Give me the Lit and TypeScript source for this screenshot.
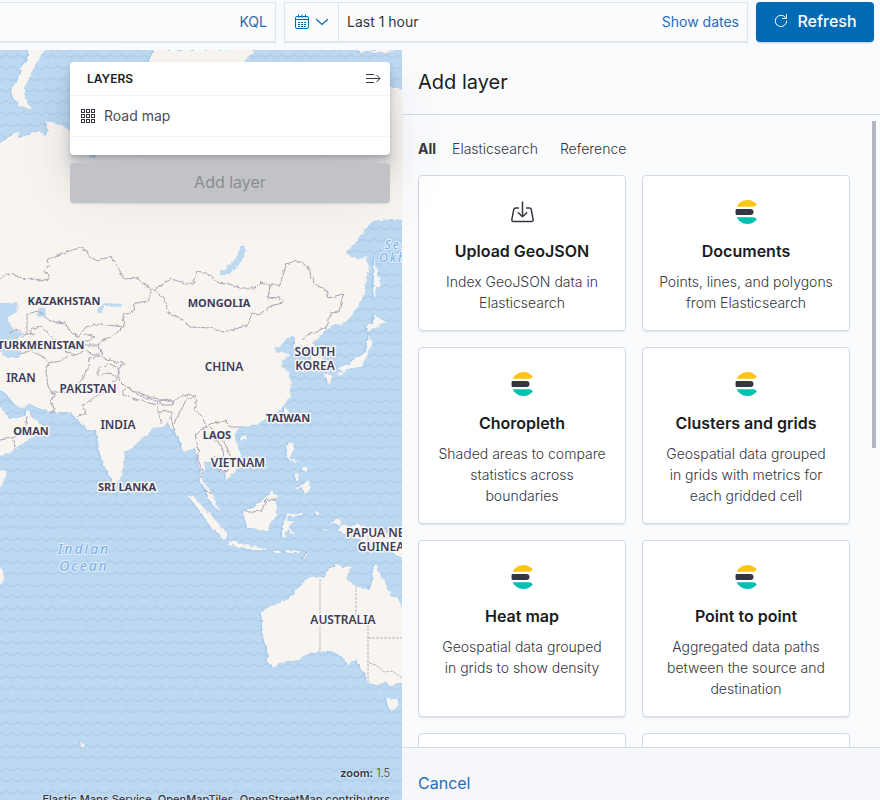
import { LitElement, html, css, svg } from "lit";
import { customElement, property } from "lit/decorators.js";

type Pt = [number, number];
type Label = { x: number; y: number; t: string };

const LAND = [
  // Novaya Zemlya
  "28,50 29,54 25,62 20,68 22,71 19,77 16,83 12,87 11,92 13,98 18,102 19,107 32,109 28,103 25,97 25,88 30,75 38,60 45,50",
  // Eurasia
  "-5,146 0,143 8,138 14,132 19,131 18,138 25,136 32,133 39,131 43,134 45,136 49,130 47,126 45,121 52,122 62,125 70,131 88,150 89,158 95,158 97,150 130,110 150,75 149,60 154,50 255,50 243,62 243,90 300,96 360,80 390,87 405,90 405,220 390,219 373,221 364,231 355,243 345,253 358,259 366,257 369,266 366,280 365,292 358,306 350,318 340,326 335,324 327,328 320,336 313,343 316,347 321,353 323,362 320,368 314,369 311,360 310,352 306,348 301,346 296,350 293,346 295,338 292,336 285,340 282,345 274,348 277,353 284,352 290,356 283,360 281,366 288,372 291,381 290,390 291,396 286,402 282,408 276,413 268,419 256,425 246,427 242,426 237,430 234,436 238,447 242,458 240,467 233,473 226,480 225,473 219,470 214,462 204,462 205,468 202,474 202,480 208,488 213,495 216,504 220,511 214,507 208,498 206,490 203,485 199,480 200,470 197,458 195,448 184,452 182,446 178,438 173,430 168,422 163,427 153,428 150,432 138,442 132,448 125,452 124,462 122,474 121,478 117,483 112,482 108,472 102,462 99,450 97,440 96,430 88,430 82,424 76,419 71,412 50,412 38,408 30,404 24,408 15,405 10,399 5,393 -5,387",
  // Arabia
  "-5,404 4,412 8,418 17,418 25,416 27,409 30,416 36,420 43,428 35,436 25,442 15,449 8,453 -5,458",
  "-5,471 7,470 3,484 -5,494",
  "-5,565 0,567 3,571 4,577 2,584 -5,590",
  // Australia
  "405,612 402,606 396,598 390,595 385,581 380,577 377,567 375,563 373,569 372,582 369,590 361,588 352,583 346,578 351,567 343,567 335,565 328,570 325,574 323,578 317,578 311,576 305,580 300,587 295,589 293,595 288,599 275,604 265,609 261,614 262,622 262,635 266,645 268,657 266,661 273,667 280,663 290,661 298,661 303,656 312,653 322,651 331,651 340,655 345,660 348,665 353,661 356,659 360,669 365,673 367,683 377,685 386,682 390,687 396,683 405,683",
  "386,698 397,699 398,704 396,708 392,712 388,707",
  // Japan and Sakhalin
  "374,256 376,266 381,286 379,288 376,287 375,300 373,290 374,275",
  "374,314 380,319 387,322 381,324 376,328 371,330 367,331 366,326 373,323",
  "368,335 371,339 372,346 368,352 366,360 361,366 355,368 348,368 344,372 337,369 341,366 350,364 355,358 362,355 366,350 367,342",
  "323,375 328,373 332,376 331,380 329,384 326,379",
  "336,374 343,371 342,374 338,376",
  // Hainan, Taiwan, Philippines
  "240,437 246,435 247,438 243,441 240,440",
  "284,408 289,410 287,419 284,416",
  "288,443 293,442 294,450 291,456 289,459 294,459 300,463 296,462 290,461 286,456",
  "303,466 306,468 306,472 303,470",
  "296,473 299,478 297,481 294,476",
  "294,488 303,484 309,480 310,489 305,493 301,487 295,489",
  // Borneo
  "242,510 248,510 256,505 262,500 272,491 274,494 279,495 275,500 277,507 276,516 272,521 268,531 260,530 247,528 245,518",
  // Sumatra and Java
  "187,495 194,497 204,508 216,521 224,529 227,532 227,540 222,538 210,526 202,514",
  "228,541 236,542 246,545 256,546 266,550 254,550 238,547 230,545",
  "274,551 280,551 279,553 274,553",
  "285,551 300,551 299,553 285,553",
  "303,556 309,552 306,557 302,559",
  // Sulawesi and Moluccas
  "287,514 302,513 302,515 288,517 286,521 294,521 289,526 295,536 291,534 287,528 285,538 282,537 282,528",
  "315,511 319,512 318,516 316,515",
  "320,530 327,529 326,531",
  // New Guinea
  "329,522 336,519 341,521 340,526 346,525 350,527 357,524 365,527 380,532 405,540 405,560 398,557 388,548 378,546 368,542 358,540 350,534 343,533 337,529 341,527",
  "80,742 85,744 84,747 81,747",
  "357,50 361,54 366,52 381,53 398,50",
];

const LAKES = [
  "-5,303 8,303 17,302 18,312 11,315 7,318 11,326 15,330 22,334 24,336 18,338 19,347 21,353 19,358 8,358 -5,350",
  "37,308 45,307 46,318 38,317 36,314 40,311",
  "97,310 104,303 122,304 119,307 104,306 101,313 98,313",
  "241,246 246,246 244,256 238,266 228,275 219,275 222,271 230,265 238,255",
];

const BORDERS = [
  "0,279 6,274 14,275 20,278 25,280 33,278 40,281 48,279 49,275 44,272 49,265 47,260 50,258 66,252 80,248 86,250 89,257 98,261 110,256 118,267 124,279 137,278 145,285 154,290",
  "154,290 171,279 193,285 198,271 212,276 216,282 226,283 240,288 255,288 261,282 270,285 280,285 286,266 285,264 297,261 308,266 314,284 326,290 328,298 343,294 339,312 331,313 327,326 317,332 310,334 302,340",
  "154,290 165,299 168,313 182,319 190,327 210,328 223,332 235,329 248,325 252,313 259,315 270,306 283,303 279,297 268,298 270,285",
  "152,290 148,301 135,303 133,312 123,315 124,327 100,324 86,327 78,337 70,332 65,323 50,321 38,311 27,314 27,334 35,334",
  "10,333 16,329 24,334 31,334 31,329 40,326 50,335 60,345 68,353 76,355 85,350 93,355 100,355",
  "123,328 110,337 98,343 101,352 104,358 116,362 124,363 119,370 119,380 127,388 150,397 172,402 180,397 190,394",
  "85,334 95,337 88,341 80,340 84,345 98,345",
  "20,354 30,351 44,357 48,363 60,361 69,355",
  "48,363 46,372 48,386 50,390 55,395 51,401 55,411 50,412",
  "50,392 60,392 72,393 80,382 88,368 89,358 104,356",
  "98,368 98,376 107,373 118,377 110,384 104,392 92,399 82,405 86,413 77,417",
  "98,368 110,364 118,368 119,378",
  "123,390 128,387 138,395 157,401 158,405 145,402 132,398 123,395 123,390",
  "159,401 166,399 174,402 172,405 162,405 159,401",
  "157,407 162,425",
  "159,411 172,412 171,418 174,430",
  "196,395 186,400 180,412 174,424",
  "190,394 198,400 194,408 203,419 206,426 201,430 195,436 199,450 197,456 202,470 200,478",
  "203,430 210,424 225,421 231,427 241,427",
  "210,427 220,436 228,450 232,460 226,464",
  "207,438 218,441 224,452 222,463 215,461 213,455",
  "218,470 228,472 228,464",
  "204,490 211,493 212,490",
  "243,510 247,512 255,512 262,510 266,500 276,499",
  "0,440 12,438 16,449",
  "12,438 25,432 27,416",
  "302,559 307,552",
];

const LABELS: Label[] = [
  { x: 64, y: 305, t: "KAZAKHSTAN" },
  { x: 41, y: 349, t: "TURKMENISTAN" },
  { x: 219, y: 307, t: "MONGOLIA" },
  { x: 31, y: 435, t: "OMAN" },
  { x: 288, y: 422, t: "TAIWAN" },
  { x: 217, y: 439, t: "LAOS" },
  { x: 127, y: 491, t: "SRI LANKA" },
];

const LARGE_LABELS: Label[] = [
  { x: 21, y: 382, t: "IRAN" },
  { x: 88, y: 393, t: "PAKISTAN" },
  { x: 224, y: 371, t: "CHINA" },
  { x: 315, y: 356, t: "SOUTH" },
  { x: 315, y: 370, t: "KOREA" },
  { x: 118, y: 429, t: "INDIA" },
  { x: 238, y: 467, t: "VIETNAM" },
  { x: 381, y: 537, t: "PAPUA NEW" },
  { x: 381, y: 551, t: "GUINEA" },
  { x: 343, y: 624, t: "AUSTRALIA" },
];

const SEAS: Label[] = [
  { x: 84, y: 554, t: "Indian" },
  { x: 84, y: 571, t: "Ocean" },
  { x: 407, y: 249, t: "Sea of" },
  { x: 408, y: 262, t: "Okhotsk" },
];

const area = (p: string) => svg`<polygon points=${p}></polygon>`;
const line = (p: string) => svg`<polyline points=${p}></polyline>`;
const text = (l: Label) => svg`<text x=${l.x} y=${l.y}>${l.t}</text>`;

@customElement("world-map")
export class WorldMap extends LitElement {
  static styles = css`
    :host { display: block; overflow: hidden; background: #bdd8f1; }
    svg { display: block; width: 100%; height: 100%; }
    .edge { fill: #95c3f0; stroke: #a5cbf1; stroke-width: 1; }
    .land { fill: #f8f4f0; }
    .water { fill: #bdd8f1; }
    .borders { fill: none; stroke: #a9a5b2; stroke-width: 1; }
    .states { fill: none; stroke: #b9b5c2; stroke-width: 1; stroke-dasharray: 3 1; }
    .wave { fill: none; stroke: #b3d0ea; stroke-width: 2; }
    text { text-anchor: middle; paint-order: stroke; stroke-linejoin: round; font-family: "Noto Sans", sans-serif; }
    .names { font-size: 11px; font-weight: 700; fill: #3f3d56; stroke: #f8f7f7; stroke-width: 3; }
    .large { font-size: 12px; font-weight: 600; }
    .seas { font-size: 14px; font-style: italic; letter-spacing: 2px; fill: #74aee9; stroke: #e3effa; stroke-width: 2; }
    .small { font-size: 12px; }
  `;

  render() {
    return html`
      <svg viewBox="0 50 402 750" preserveAspectRatio="xMidYMid slice" role="img" aria-label="World map">
        <defs>
          <pattern id="waves" width="23" height="23" y="5" patternUnits="userSpaceOnUse">
            <path class="wave" d="M-6 3Q-1 9 4 5Q5 4 6 4Q7 4 8 5Q12 8 16 5Q17 4 18 4Q19 4 20 5Q24 8 28 4"></path>
            <path class="wave" d="M-6 16Q-4 18 -2 16Q-1 15 0 15Q1 15 2 16Q6 19 10 16Q11 15 12 15Q13 15 14 16Q18 19 22 16Q23 15 24 15"></path>
          </pattern>
          <filter id="rough" x="0" y="0" width="1" height="1">
            <feTurbulence type="fractalNoise" baseFrequency="0.22" numOctaves="2" seed="4"></feTurbulence>
            <feDisplacementMap in="SourceGraphic" scale="4" xChannelSelector="R" yChannelSelector="G"></feDisplacementMap>
          </filter>
        </defs>
        <rect y="50" width="402" height="750" fill="url(#waves)"></rect>
        <g filter="url(#rough)">
          <g class="edge" transform="translate(-1 0)">${LAND.map(area)}</g>
          <g class="land">${LAND.map(area)}</g>
          <g class="water">${LAKES.map(area)}</g>
          <g class="borders">${BORDERS.map(line)}</g>
        </g>
        <g class="states">
          ${["320,579 320,651", "356,585 356,620", "368,620 368,682", "368,638 402,638", "369,663 376,665 384,672 392,671 402,678", "368,535 368,554"].map(line)}
        </g>
        <g class="names">${LABELS.map(text)}<g class="large">${LARGE_LABELS.map(text)}</g></g>
        <g class="seas">${SEAS.slice(0, 2).map(text)}<g class="small">${SEAS.slice(2).map(text)}</g></g>
      </svg>
    `;
  }
}

const elastic = html`<svg width="24" height="24" viewBox="0 0 32 32" aria-hidden="true">
  <path fill="#343741" d="M2 16c0 1.384.194 2.72.524 4H22a4 4 0 000-8H2.524A15.984 15.984 0 002 16z"></path>
  <path fill="#FEC514" d="M28.924 7.662A15.381 15.381 0 0030.48 6C27.547 2.346 23.05 0 18 0 11.679 0 6.239 3.678 3.644 9H25.51a5.039 5.039 0 003.413-1.338z"></path>
  <path fill="#00BFB3" d="M25.51 23H3.645C6.24 28.323 11.679 32 18 32c5.05 0 9.547-2.346 12.48-6a15.381 15.381 0 00-1.556-1.662A5.034 5.034 0 0025.51 23z"></path>
</svg>`;

const upload = html`<svg width="24" height="24" viewBox="0 0 24 24" fill="none" stroke="#343741" stroke-width="1.5" stroke-linecap="round" stroke-linejoin="round" aria-hidden="true">
  <path d="M8.400 7.900H5.600c-1 0-1.600.5-1.800 1.400L1.900 19.100c-.3 1.500.3 2.400 1.600 2.400h18c1.300 0 1.900-.9 1.600-2.400L21.200 9.300c-.2-.9-.8-1.400-1.800-1.400h-2.800"></path>
  <path d="M12.500 2v14.700M8.300 12.800l4.200 4 4.200-4"></path>
</svg>`;

@customElement("layer-card")
export class LayerCard extends LitElement {
  @property() heading = "";
  @property() text = "";
  @property() icon = "elastic";

  static styles = css`
    :host { display: flex; }
    .card {
      flex: 1; min-width: 0; display: flex; flex-direction: column; align-items: center;
      padding: 24px 16px 17px; margin: 0; border: 1px solid #d3dae6; border-radius: 4px;
      background: #fff; box-shadow: 0 2px 2px -1px rgba(152, 162, 179, 0.3);
      font: 300 14px/21px Inter, sans-serif; color: #343741; text-align: center;
    }
    .title { margin-top: 15px; font-size: 16px; line-height: 24px; font-weight: 600; color: #1a1c21; }
    .text { margin-top: 8px; }
    svg { display: block; flex: none; }
  `;

  render() {
    return html`<button class="card" type="button">
      ${this.icon === "upload" ? upload : elastic}
      <span class="title">${this.heading}</span>
      <span class="text">${this.text}</span>
    </button>`;
  }
}

const CARDS = [
  { icon: "upload", heading: "Upload GeoJSON", text: "Index GeoJSON data in Elasticsearch" },
  { icon: "elastic", heading: "Documents", text: "Points, lines, and polygons from Elasticsearch" },
  { icon: "elastic", heading: "Choropleth", text: "Shaded areas to compare statistics across boundaries" },
  { icon: "elastic", heading: "Clusters and grids", text: "Geospatial data grouped in\u00a0grids with metrics for each\u00a0gridded cell" },
  { icon: "elastic", heading: "Heat map", text: "Geospatial data grouped in\u00a0grids to show density" },
  { icon: "elastic", heading: "Point to point", text: "Aggregated data paths between the source and destination" },
  { icon: "elastic", heading: "", text: "" },
  { icon: "elastic", heading: "", text: "" },
];

const CELLS: Pt[] = [0, 1, 2].flatMap((r) => [0, 1, 2].map((c): Pt => [c * 5 + 1, r * 5 + 1]));

@customElement("app-root")
export class AppRoot extends LitElement {
  static styles = css`
    :host { display: block; font: 400 14px/21px Inter, sans-serif; color: #343741; }
    * { box-sizing: border-box; }
    button, input { font: inherit; color: inherit; margin: 0; padding: 0; border: 0; background: none; }
    svg { display: block; flex: none; }
    .shell { display: flex; flex-direction: column; height: 100vh; overflow: hidden; background: #fafbfd; }

    .bar { display: flex; gap: 8px; padding: 2px 6px 8px 0; }
    .field { display: flex; align-items: center; height: 40px; border: 1px solid #dfe3ee; background: #fbfcfd; box-shadow: 0 1px 1px rgba(152, 162, 179, 0.2); }
    .field button { padding-bottom: 2px; }
    .query { flex: 1; min-width: 0; border-left: 0; padding-right: 8px; }
    .query input { flex: 1; min-width: 0; height: 38px; outline: 0; }
    .link { color: #2a6db3; }
    .dates { width: 464px; padding-right: 8px; }
    .field .quick { display: flex; align-items: center; gap: 4px; height: 38px; padding: 0 8px 0 9px; border-right: 1px solid #dfe3ee; }
    .range { flex: 1; padding-left: 8px; height: 38px; text-align: left; }
    .refresh { display: flex; align-items: center; justify-content: center; gap: 8px; width: 118px; height: 40px; padding-bottom: 2px; border-radius: 4px; background: #006bb4; color: #fff; font-size: 16px; font-weight: 500; box-shadow: 0 2px 2px -1px rgba(54, 97, 126, 0.3); }

    .main { flex: 1; min-height: 0; display: grid; grid-template-columns: minmax(0, 1fr) 478px; }
    .map { position: relative; min-height: 0; }
    world-map { position: absolute; inset: 0; }
    .widget { position: absolute; top: 12px; right: 12px; width: 320px; display: flex; flex-direction: column; gap: 8px; z-index: 1; }
    .layers {
      border-radius: 4px; background: #fff; padding-bottom: 18px;
      box-shadow: 0 40px 64px 0 rgba(65, 78, 101, 0.1), 0 24px 32px 0 rgba(65, 78, 101, 0.1), 0 16px 16px 0 rgba(65, 78, 101, 0.1), 0 8px 8px 0 rgba(65, 78, 101, 0.1), 0 4px 4px 0 rgba(65, 78, 101, 0.1), 0 2px 2px 0 rgba(65, 78, 101, 0.1);
    }
    .head { display: flex; align-items: center; justify-content: space-between; height: 34px; padding: 0 9px 0 17px; border-bottom: 1px solid #f2f4f8; }
    .head h2 { margin: 0; font-size: 12px; line-height: 18px; font-weight: 600; color: #1a1c21; }
    .row { display: flex; align-items: center; gap: 8px; width: 100%; height: 41px; padding: 0 10px; border-bottom: 1px solid #f2f4f8; color: #4b4e57; }
    .row span { padding-bottom: 2px; }
    .add { position: relative; height: 40px; padding-bottom: 2px; border-radius: 4px; background: #c2c3c6; color: #8b8d92; font-size: 16px; box-shadow: 0 2px 2px -1px rgba(152, 162, 179, 0.3); }
    .credits { position: absolute; right: 12px; bottom: -7px; font-size: 11px; line-height: 16px; font-weight: 300; text-align: right; text-shadow: 0 0 2px #fff; white-space: nowrap; display: flex; flex-direction: column; gap: 10px; }
    .credits b { font-weight: 600; }
    .credits a { font-weight: 500; color: inherit; text-decoration: none; }

    .flyout { display: flex; flex-direction: column; min-width: 0; min-height: 0; background: #fafbfd; }
    .title { margin: 0; padding: 16px; font-size: 20px; line-height: 32px; font-weight: 400; color: #1a1c21; border-bottom: 1px solid #d3dae6; }
    .body { position: relative; flex: 1; min-height: 0; display: flex; }
    .scroll { flex: 1; overflow-y: auto; scrollbar-width: none; padding: 23px 30px 0 16px; }
    .thumb { position: absolute; top: 6px; right: 4px; width: 4px; height: 327px; background: #b3b5c1; }
    .tabs { display: flex; gap: 16px; margin-bottom: 16px; font-weight: 300; }
    .tabs .on { font-weight: 700; }
    .tabs .ref { margin-left: 6px; }
    .cards { display: grid; grid-template-columns: 1fr 1fr; gap: 16px; }
    .foot { flex: none; padding: 18px 16px 0; border-top: 1px solid #d3dae6; background: #f5f7fa; }
    .foot button { height: 34px; font-size: 16px; }
  `;

  render() {
    return html`
      <div class="shell">
        <header class="bar">
          <div class="field query">
            <input type="text" aria-label="Search query" />
            <button class="link" type="button">KQL</button>
          </div>
          <div class="field dates">
            <button class="quick" type="button" aria-label="Quick date menu">
              <svg width="16" height="16" viewBox="0 0 16 16" fill="none" stroke="#006bb4" aria-hidden="true">
                <rect x="1.500" y="2.500" width="13" height="12" rx="1.500"></rect>
                <path d="M1.500 5.500h13M4.500 .5v3M8 .5v3M11.500 .5v3"></path>
                <path d="M4 8.500h8M4 10.500h8M4 12.500h8" stroke-dasharray="2 1"></path>
              </svg>
              <svg width="16" height="16" viewBox="0 0 16 16" fill="none" stroke="#006bb4" stroke-width="1.200" stroke-linecap="round" aria-hidden="true"><path d="M2.500 5.500L8 10.500l5.500-5"></path></svg>
            </button>
            <button class="range" type="button">Last 1 hour</button>
            <button class="link" type="button">Show dates</button>
          </div>
          <button class="refresh" type="button">
            <svg width="16" height="16" viewBox="0 0 16 16" fill="none" stroke="#fff" stroke-linecap="round" aria-hidden="true">
              <path d="M12.300 4.200A5.700 5.700 0 1 0 13.700 8"></path><path d="M13.500 1.500v4h-4"></path>
            </svg>
            <span>Refresh</span>
          </button>
        </header>

        <main class="main">
          <section class="map">
            <world-map></world-map>
            <div class="widget">
              <div class="layers">
                <div class="head">
                  <h2>LAYERS</h2>
                  <button type="button" aria-label="Collapse layers panel">
                    <svg width="16" height="16" viewBox="0 0 16 16" fill="none" stroke="#343741" aria-hidden="true">
                      <path d="M1 3.500h8M1 7.500h14M1 11.500h8M11.500 4l3.500 3.500-3.500 3.500"></path>
                    </svg>
                  </button>
                </div>
                <button class="row" type="button">
                  <svg width="16" height="16" viewBox="0 0 16 16" fill="none" stroke="#343741" aria-hidden="true">
                    ${CELLS.map(([x, y]) => svg`<rect x=${x + 0.5} y=${y + 0.5} width="3" height="3"></rect>`)}
                  </svg>
                  <span>Road map</span>
                </button>
              </div>
              <button class="add" type="button" disabled>Add layer</button>
            </div>
            <div class="credits">
              <div><b>zoom:</b> 1.5</div>
              <div><a href="#ems">Elastic Maps Service</a>, <a href="#tiles">OpenMapTiles</a>, <a href="#osm">OpenStreetMap contributors</a></div>
            </div>
          </section>

          <aside class="flyout">
            <h1 class="title">Add layer</h1>
            <div class="body">
              <div class="scroll">
                <nav class="tabs">
                  <button class="on" type="button">All</button>
                  <button type="button">Elasticsearch</button>
                  <button class="ref" type="button">Reference</button>
                </nav>
                <div class="cards">
                  ${CARDS.map((c) => html`<layer-card .icon=${c.icon} .heading=${c.heading} .text=${c.text}></layer-card>`)}
                </div>
              </div>
              <div class="thumb"></div>
            </div>
            <footer class="foot"><button class="link" type="button">Cancel</button></footer>
          </aside>
        </main>
      </div>
    `;
  }
}
